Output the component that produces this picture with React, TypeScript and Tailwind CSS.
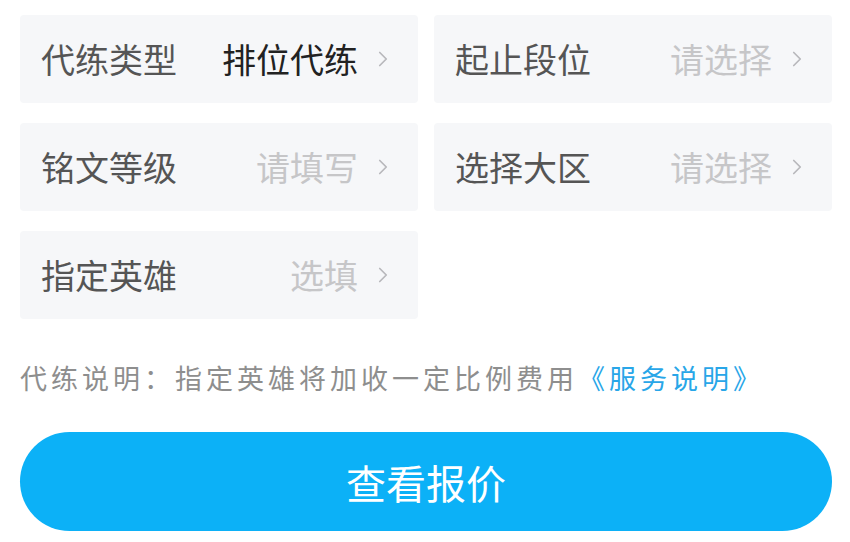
import { ChevronRight } from "lucide-react";

const fields = [
  { label: "代练类型", value: "排位代练", filled: true },
  { label: "起止段位", value: "请选择", filled: false },
  { label: "铭文等级", value: "请填写", filled: false },
  { label: "选择大区", value: "请选择", filled: false },
  { label: "指定英雄", value: "选填", filled: false },
];

const Field = ({ label, value, filled }: { label: string; value: string; filled: boolean }) => (
  <div className="h-[88px] rounded-[4px] bg-[#f6f7f9] flex items-center pl-[21px] pr-[22px]">
    <span className="text-[34px] text-[#555555] leading-none">{label}</span>
    <span
      className={
        "ml-auto text-[34px] leading-none " + (filled ? "text-[#222222]" : "text-[#c6c6c8]")
      }
    >
      {value}
    </span>
    <ChevronRight className="ml-[12px] text-[#b8b8bc]" size={26} strokeWidth={1.6} />
  </div>
);

export default function App() {
  return (
    <div
      className="w-[850px] h-[542px] bg-white overflow-hidden pt-[15px]"
      style={{ fontFamily: '"Noto Sans CJK SC", "Noto Sans", sans-serif' }}
    >
      {/* form grid */}
      <div className="ml-[20px] w-[812px] grid grid-cols-2 gap-x-[16px] gap-y-[20px]">
        {fields.map((f) => (
          <Field key={f.label} {...f} />
        ))}
      </div>

      {/* note */}
      <div className="ml-[20px] mt-[44px] text-[27px] leading-[30px] tracking-[4px] text-[#8e8e8e] whitespace-nowrap">
        代练说明：指定英雄将加收一定比例费用
        <span className="text-[#28a6e8]">《服务说明》</span>
      </div>

      {/* button */}
      <button className="ml-[20px] mt-[39px] w-[812px] h-[99px] rounded-full bg-[#0cb1f7] text-white text-[40px] leading-none flex items-center justify-center">
        查看报价
      </button>
    </div>
  );
}
